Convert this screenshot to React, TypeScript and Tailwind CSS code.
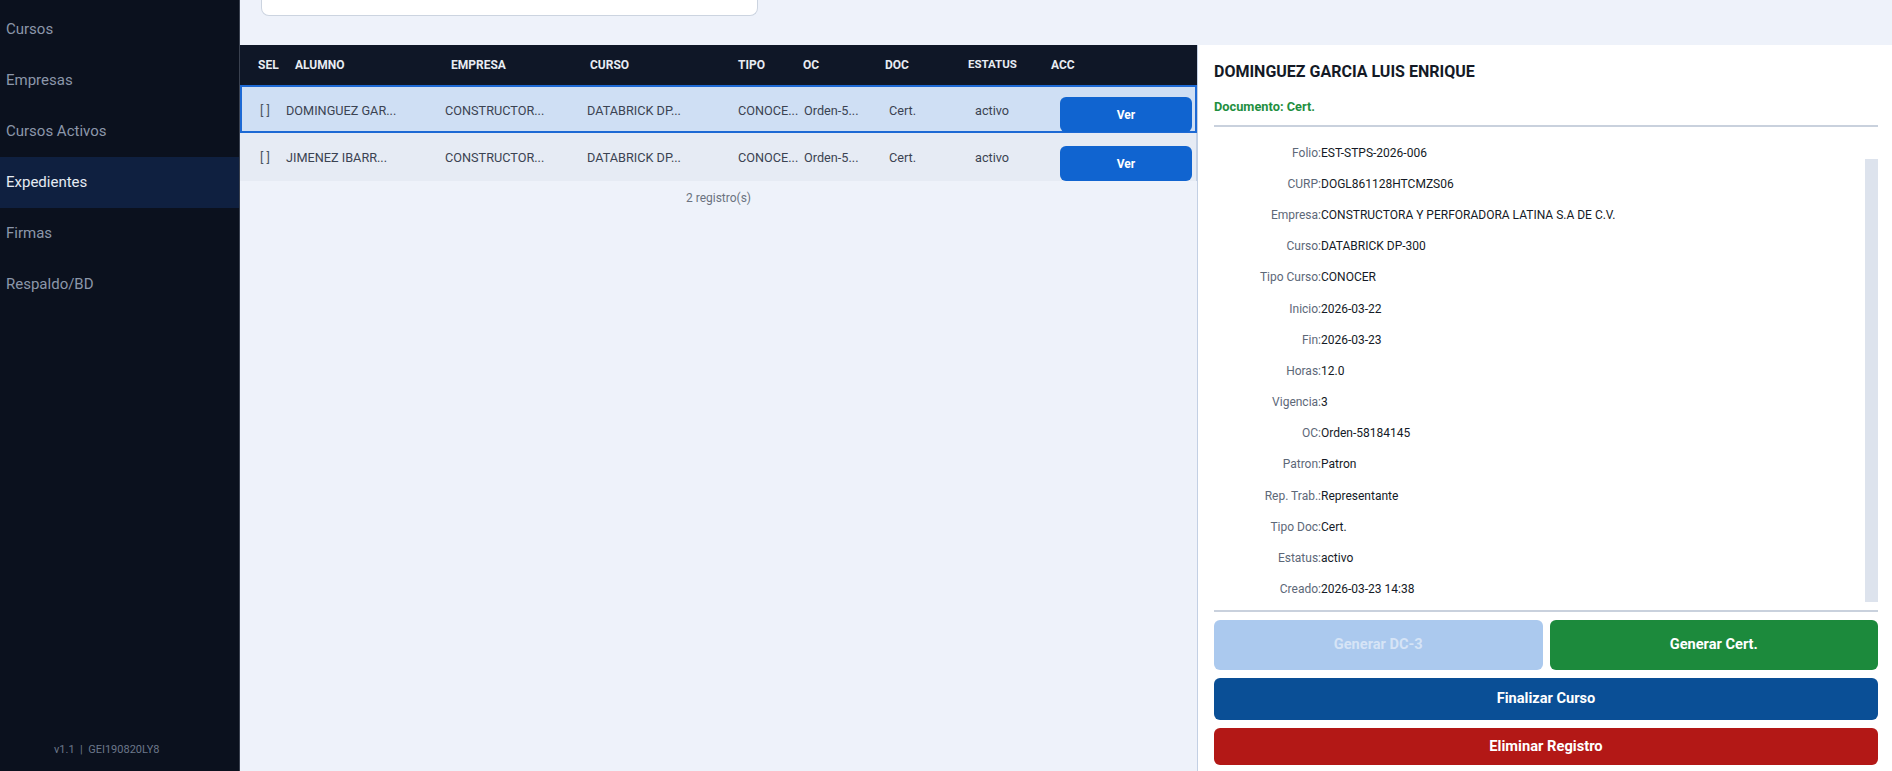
import React from "react";

const navItems = ["Cursos", "Empresas", "Cursos Activos", "Expedientes", "Firmas", "Respaldo/BD"];

const rows = [
  { nombre: "DOMINGUEZ GAR...", empresa: "CONSTRUCTOR...", curso: "DATABRICK DP...", tipo: "CONOCE...", oc: "Orden-5...", doc: "Cert.", estatus: "activo", selected: true },
  { nombre: "JIMENEZ IBARR...", empresa: "CONSTRUCTOR...", curso: "DATABRICK DP...", tipo: "CONOCE...", oc: "Orden-5...", doc: "Cert.", estatus: "activo", selected: false },
];

const details: [string, string][] = [
  ["Folio:", "EST-STPS-2026-006"],
  ["CURP:", "DOGL861128HTCMZS06"],
  ["Empresa:", "CONSTRUCTORA Y PERFORADORA LATINA S.A DE C.V."],
  ["Curso:", "DATABRICK DP-300"],
  ["Tipo Curso:", "CONOCER"],
  ["Inicio:", "2026-03-22"],
  ["Fin:", "2026-03-23"],
  ["Horas:", "12.0"],
  ["Vigencia:", "3"],
  ["OC:", "Orden-58184145"],
  ["Patron:", "Patron"],
  ["Rep. Trab.:", "Representante"],
  ["Tipo Doc:", "Cert."],
  ["Estatus:", "activo"],
  ["Creado:", "2026-03-23 14:38"],
];

export default function App() {
  return (
    <div className="flex w-[1892px] h-[771px] overflow-hidden bg-[#eef2fa] [font-family:Roboto,'Noto_Sans',sans-serif]">
      {/* Sidebar */}
      <aside className="w-[240px] shrink-0 bg-[#0b111e] border-r border-[#3a414f] flex flex-col">
        <nav className="pt-[4px] flex flex-col">
          {navItems.map((n) => (
            <div
              key={n}
              className={
                n === "Expedientes"
                  ? "h-[51px] flex items-center pl-[6px] text-[15px] bg-[#0f2040] text-[#e6ebf3]"
                  : "h-[51px] flex items-center pl-[6px] text-[15px] text-[#8c97aa]"
              }
            >
              {n}
            </div>
          ))}
        </nav>
        <div className="mt-auto pb-[13px] pl-[54px] text-[11px] text-[#6c778a] whitespace-pre">
          {"v1.1  |  GEI190820LY8"}
        </div>
      </aside>

      {/* Main */}
      <main className="flex-1 flex flex-col min-w-0">
        <div className="h-[45px] shrink-0 pl-[21px]">
          <div className="w-[497px] h-[16px] bg-white border border-t-0 border-[#ccd4e0] rounded-b-lg" />
        </div>
        <div className="flex-1 flex min-h-0">
          {/* Table */}
          <section className="w-[957px] shrink-0 flex flex-col">
            <div className="h-[40px] bg-[#0f1727] flex items-center pl-[18px] text-[12px] font-bold text-[#e8ecf2]">
              <div className="w-[37px]">SEL</div>
              <div className="w-[156px]">ALUMNO</div>
              <div className="w-[139px]">EMPRESA</div>
              <div className="w-[148px]">CURSO</div>
              <div className="w-[65px]">TIPO</div>
              <div className="w-[82px]">OC</div>
              <div className="w-[83px]">DOC</div>
              <div className="w-[83px] text-[11.5px]">ESTATUS</div>
              <div>ACC</div>
            </div>
            {rows.map((r, i) => (
              <div
                key={i}
                className={
                  r.selected
                    ? "h-[48px] flex items-center pl-[18px] pt-[3px] text-[12.7px] text-[#3b4352] bg-[#cfdff4] border-2 border-[#1d69d4]"
                    : "h-[48px] flex items-center pl-[20px] pt-[2px] text-[12.7px] text-[#3b4352] bg-[#e6ebf4] border-r border-[#c3d0e4]"
                }
              >
                <div className="w-[26px] text-[#4b5563]">[ ]</div>
                <div className="w-[159px]">{r.nombre}</div>
                <div className="w-[142px]">{r.empresa}</div>
                <div className="w-[151px]">{r.curso}</div>
                <div className="w-[66px]">{r.tipo}</div>
                <div className="w-[85px]">{r.oc}</div>
                <div className="w-[86px]">{r.doc}</div>
                <div className="w-[85px]">{r.estatus}</div>
                <div className={r.selected ? "self-end mb-[-1px]" : "self-end"}>
                  <button className="w-[132px] h-[35px] rounded-md bg-[#1064d0] text-white text-[12px] font-bold flex items-center justify-center">
                    Ver
                  </button>
                </div>
              </div>
            ))}
            <div className="pt-[8px] text-center text-[12px] text-[#6b7280]">2 registro(s)</div>
          </section>

          {/* Detail */}
          <section className="flex-1 bg-white border-l border-[#c3d0e4] flex flex-col pl-[16px] pr-[14px] min-w-0">
            <h2 className="pt-[17px] text-[16px] leading-[20px] font-bold text-[#141a26]">
              DOMINGUEZ GARCIA LUIS ENRIQUE
            </h2>
            <div className="mt-[17px] text-[12.8px] leading-[16px] font-bold text-[#1f8f3f]">Documento: Cert.</div>
            <div className="mt-[10px] h-[2px] bg-[#c9d1dd]" />
            <div className="flex h-[483px] pt-[10px]">
              <div className="flex-1 flex flex-col">
                {details.map(([k, v]) => (
                  <div key={k} className="h-[31.2px] shrink-0 flex items-center text-[12px]">
                    <span className="w-[107px] text-right text-[#5d6878]">{k}</span>
                    <span className="text-[#141a26]">{v}</span>
                  </div>
                ))}
              </div>
              <div className="w-[13px] mt-[22px] mb-[8px] bg-[#dde3ed]" />
            </div>
            <div className="h-[2px] bg-[#c9d1dd]" />
            <div className="mt-[8px] grid grid-cols-2 gap-[7px]">
              <button className="h-[50px] rounded-md bg-[#abc9ee] text-[#d6e4f6] text-[14.6px] font-bold">Generar DC-3</button>
              <button className="h-[50px] rounded-md bg-[#1c8a3c] text-white text-[14.6px] font-bold">Generar Cert.</button>
            </div>
            <button className="mt-[8px] h-[42px] rounded-md bg-[#0a4f96] text-white text-[14.6px] font-bold">Finalizar Curso</button>
            <button className="mt-[8px] h-[37px] rounded-md bg-[#b31816] text-white text-[14.7px] font-bold">Eliminar Registro</button>
          </section>
        </div>
      </main>
    </div>
  );
}
